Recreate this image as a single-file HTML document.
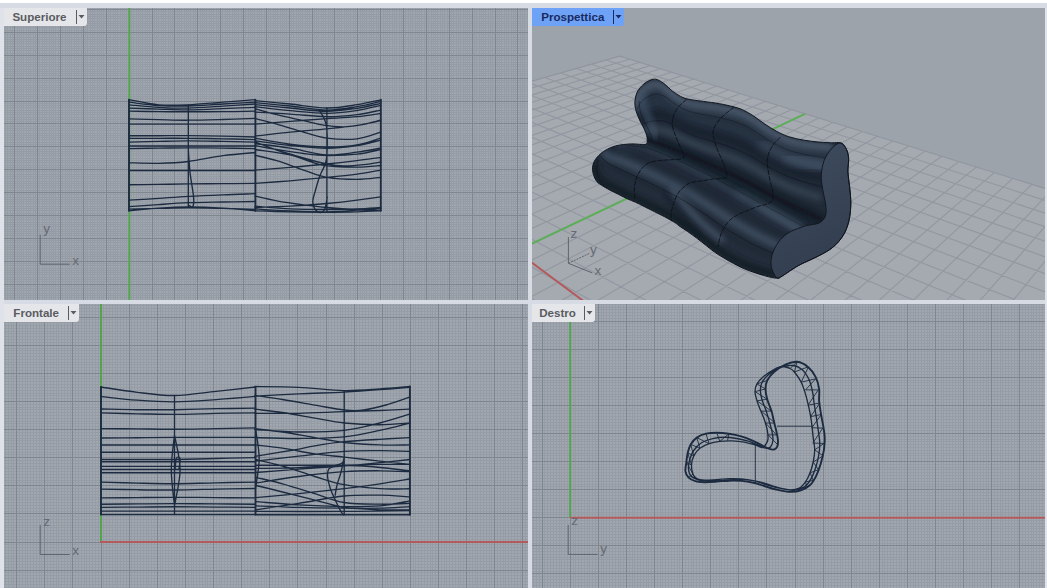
<!DOCTYPE html>
<html lang="it"><head><meta charset="utf-8"><title>Rhino viewports</title>
<style>
html,body{margin:0;padding:0;background:#d7dbe3;}
body{width:1047px;height:588px;overflow:hidden;font-family:"Liberation Sans",sans-serif;}
svg{display:block}
.mi{stroke:#969ca5;stroke-width:1;fill:none;shape-rendering:crispEdges}
.ma{stroke:#80868f;stroke-width:1;fill:none;shape-rendering:crispEdges}
.w{stroke:#1c2b40;stroke-width:1.35;fill:none;stroke-linecap:round;stroke-linejoin:round}
.w2{stroke:#1c2b40;stroke-width:1.9;fill:none;stroke-linecap:round;stroke-linejoin:round}
.w3{stroke:#1c2b40;stroke-width:.9;fill:none;stroke-linejoin:round}
.lb{font:bold 11.6px "Liberation Sans",sans-serif}
.ax{font:13.5px "Liberation Sans",sans-serif;fill:#656a73}
.pg{stroke:#8b909b;stroke-width:1.1;fill:none;opacity:.75}</style></head>
<body>
<svg width="1047" height="588" viewBox="0 0 1047 588">
<defs><clipPath id="c_top"><rect x="4" y="8" width="524" height="292"/></clipPath><clipPath id="c_persp"><rect x="532" y="8" width="513" height="292"/></clipPath><clipPath id="c_front"><rect x="4" y="304" width="524" height="284"/></clipPath><clipPath id="c_right"><rect x="532" y="304" width="513" height="284"/></clipPath>
<clipPath id="sofaclip"><path d="M635 100.6C635.4 97.2 636.2 93.5 638.1 90.4C640 87.3 643.3 84.1 646.2 82.2C649.1 80.3 652.5 79 655.4 79.2C658.3 79.4 660.7 81.3 663.6 83.3C666.5 85.3 669.6 89 672.8 91.4C676 93.8 680 96.2 683 97.6C686 99 688.3 99 691.1 99.6C693.9 100.2 696 100.4 700 101C704 101.6 710.2 102.2 715.3 103C720.4 103.8 726 104.9 730.6 106.1C735.2 107.2 739.1 108.2 742.9 109.9C746.7 111.6 750 113.7 753.6 116C757.2 118.3 760.5 121.2 764.3 123.7C768.1 126.2 772.5 129.1 776.6 131.3C780.7 133.5 784.2 135.2 788.8 136.7C793.4 138.2 799 139.3 804.1 140.2C809.2 141.1 814.8 141.7 819.4 142.1C824 142.5 828.2 142.7 831.7 142.8C835.2 142.9 837.8 142 840.1 142.8C842.4 143.6 844.3 145.3 845.7 147.8C847.1 150.3 848.2 153.6 848.6 157.6C849 161.6 847.7 167.3 847.9 172.1C848.1 176.9 849.1 181.3 849.6 186.6C850.1 191.9 850.9 198.1 850.8 203.9C850.7 209.7 850.1 216 848.8 221.3C847.5 226.6 845.7 231.4 843 235.7C840.3 240 836.9 243.9 832.8 247.3C828.7 250.7 823.9 253.1 818.4 256C812.9 258.9 804.8 262.2 800 264.7C795.2 267.2 792.7 269.2 789.7 271.1C786.7 273 784.1 275 782 276.2C779.9 277.4 778.6 277.9 776.9 278.1C775.2 278.3 773.9 277.9 771.8 277.5C769.7 277.1 767.2 276.5 764.2 275.6C761.2 274.8 757.4 273.6 754 272.4C750.6 271.2 747.2 270.1 743.8 268.6C740.4 267.1 737 265.3 733.6 263.5C730.2 261.7 726.6 259.6 723.4 257.7C720.2 255.8 717.4 254.1 714.4 252C711.4 249.9 708.5 247.3 705.5 245C702.5 242.7 699.6 240.2 696.6 238C693.6 235.8 690.5 233.5 687.7 231.6C684.9 229.7 682.2 228 680 226.5C677.8 225 677.3 224.1 674.7 222.5C672.1 220.9 667.9 218.5 664.5 216.7C661.1 214.9 657.7 213.3 654.3 211.6C650.9 209.9 647.3 208.1 644.1 206.5C640.9 204.9 638 203.4 635.2 202.1C632.4 200.8 630.3 200.2 627.5 198.9C624.7 197.6 621.6 195.9 618.6 194.4C615.6 192.9 612.5 191.5 609.7 190C606.9 188.5 604.1 186.9 602 185.5C599.9 184.1 598.3 183.4 596.9 181.7C595.5 180 594.4 177.6 593.7 175.3C593 173 592.2 170.3 592.5 167.7C592.8 165.1 593.4 162.5 595.2 159.8C597 157.1 600 153.9 603.4 151.6C606.8 149.3 610.9 147.2 615.6 145.9C620.4 144.6 627 144.1 631.9 143.9C636.8 143.7 642.7 145.2 645.2 144.5C647.8 143.8 647.2 141.6 647.2 139.4C647.2 137.2 646.4 134.3 645.2 131.2C644 128.1 641.6 124.4 640.1 121C638.6 117.6 636.9 114.2 636 110.8C635.1 107.4 634.6 104 635 100.6Z"/></clipPath><filter id="b2" x="-20%" y="-20%" width="140%" height="140%"><feGaussianBlur stdDeviation="2"/></filter><filter id="b3" x="-20%" y="-20%" width="140%" height="140%"><feGaussianBlur stdDeviation="3.2"/></filter><filter id="b5" x="-20%" y="-20%" width="140%" height="140%"><feGaussianBlur stdDeviation="5"/></filter><linearGradient id="capg" x1="0" y1="0" x2="0.3" y2="1"><stop offset="0" stop-color="#3f4c5f"/><stop offset="1" stop-color="#333f50"/></linearGradient>
</defs>
<rect width="1047" height="588" fill="#d7dbe3"/>
<rect width="1047" height="3" fill="#ffffff"/>
<rect x="0" y="8" width="4" height="580" fill="#dfe2e8"/>
<rect x="1045" y="8" width="2" height="580" fill="#e0e3ea"/>
<rect x="4" y="8" width="524" height="292" fill="#a1a7af"/>
<rect x="532" y="8" width="513" height="292" fill="#9da3ab"/>
<rect x="4" y="304" width="524" height="284" fill="#a1a7af"/>
<rect x="532" y="304" width="513" height="284" fill="#a1a7af"/>
<g clip-path="url(#c_top)">
<path class="mi" d="M5.6 8V300M7.9 8V300M10.2 8V300M12.5 8V300M17 8V300M19.3 8V300M21.6 8V300M23.9 8V300M26.2 8V300M28.5 8V300M30.8 8V300M33 8V300M35.3 8V300M39.9 8V300M42.2 8V300M44.5 8V300M46.8 8V300M49.1 8V300M51.3 8V300M53.6 8V300M55.9 8V300M58.2 8V300M62.8 8V300M65.1 8V300M67.4 8V300M69.6 8V300M71.9 8V300M74.2 8V300M76.5 8V300M78.8 8V300M81.1 8V300M85.6 8V300M87.9 8V300M90.2 8V300M92.5 8V300M94.8 8V300M97.1 8V300M99.4 8V300M101.7 8V300M103.9 8V300M108.5 8V300M110.8 8V300M113.1 8V300M115.4 8V300M117.7 8V300M120 8V300M122.2 8V300M124.5 8V300M126.8 8V300M131.4 8V300M133.7 8V300M136 8V300M138.2 8V300M140.5 8V300M142.8 8V300M145.1 8V300M147.4 8V300M149.7 8V300M154.3 8V300M156.5 8V300M158.8 8V300M161.1 8V300M163.4 8V300M165.7 8V300M168 8V300M170.3 8V300M172.6 8V300M177.1 8V300M179.4 8V300M181.7 8V300M184 8V300M186.3 8V300M188.6 8V300M190.8 8V300M193.1 8V300M195.4 8V300M200 8V300M202.3 8V300M204.6 8V300M206.9 8V300M209.1 8V300M211.4 8V300M213.7 8V300M216 8V300M218.3 8V300M222.9 8V300M225.2 8V300M227.4 8V300M229.7 8V300M232 8V300M234.3 8V300M236.6 8V300M238.9 8V300M241.2 8V300M245.7 8V300M248 8V300M250.3 8V300M252.6 8V300M254.9 8V300M257.2 8V300M259.5 8V300M261.7 8V300M264 8V300M268.6 8V300M270.9 8V300M273.2 8V300M275.5 8V300M277.8 8V300M280 8V300M282.3 8V300M284.6 8V300M286.9 8V300M291.5 8V300M293.8 8V300M296.1 8V300M298.3 8V300M300.6 8V300M302.9 8V300M305.2 8V300M307.5 8V300M309.8 8V300M314.3 8V300M316.6 8V300M318.9 8V300M321.2 8V300M323.5 8V300M325.8 8V300M328.1 8V300M330.4 8V300M332.6 8V300M337.2 8V300M339.5 8V300M341.8 8V300M344.1 8V300M346.4 8V300M348.7 8V300M350.9 8V300M353.2 8V300M355.5 8V300M360.1 8V300M362.4 8V300M364.7 8V300M366.9 8V300M369.2 8V300M371.5 8V300M373.8 8V300M376.1 8V300M378.4 8V300M383 8V300M385.2 8V300M387.5 8V300M389.8 8V300M392.1 8V300M394.4 8V300M396.7 8V300M399 8V300M401.3 8V300M405.8 8V300M408.1 8V300M410.4 8V300M412.7 8V300M415 8V300M417.3 8V300M419.5 8V300M421.8 8V300M424.1 8V300M428.7 8V300M431 8V300M433.3 8V300M435.6 8V300M437.8 8V300M440.1 8V300M442.4 8V300M444.7 8V300M447 8V300M451.6 8V300M453.9 8V300M456.1 8V300M458.4 8V300M460.7 8V300M463 8V300M465.3 8V300M467.6 8V300M469.9 8V300M474.4 8V300M476.7 8V300M479 8V300M481.3 8V300M483.6 8V300M485.9 8V300M488.2 8V300M490.4 8V300M492.7 8V300M497.3 8V300M499.6 8V300M501.9 8V300M504.2 8V300M506.5 8V300M508.7 8V300M511 8V300M513.3 8V300M515.6 8V300M520.2 8V300M522.5 8V300M524.8 8V300M527 8V300M4 11.8H528M4 14.1H528M4 16.4H528M4 18.7H528M4 21H528M4 23.3H528M4 25.5H528M4 27.8H528M4 30.1H528M4 34.7H528M4 37H528M4 39.3H528M4 41.5H528M4 43.8H528M4 46.1H528M4 48.4H528M4 50.7H528M4 53H528M4 57.6H528M4 59.8H528M4 62.1H528M4 64.4H528M4 66.7H528M4 69H528M4 71.3H528M4 73.6H528M4 75.9H528M4 80.4H528M4 82.7H528M4 85H528M4 87.3H528M4 89.6H528M4 91.9H528M4 94.1H528M4 96.4H528M4 98.7H528M4 103.3H528M4 105.6H528M4 107.9H528M4 110.2H528M4 112.4H528M4 114.7H528M4 117H528M4 119.3H528M4 121.6H528M4 126.2H528M4 128.5H528M4 130.7H528M4 133H528M4 135.3H528M4 137.6H528M4 139.9H528M4 142.2H528M4 144.5H528M4 149H528M4 151.3H528M4 153.6H528M4 155.9H528M4 158.2H528M4 160.5H528M4 162.8H528M4 165H528M4 167.3H528M4 171.9H528M4 174.2H528M4 176.5H528M4 178.8H528M4 181.1H528M4 183.3H528M4 185.6H528M4 187.9H528M4 190.2H528M4 194.8H528M4 197.1H528M4 199.4H528M4 201.6H528M4 203.9H528M4 206.2H528M4 208.5H528M4 210.8H528M4 213.1H528M4 217.6H528M4 219.9H528M4 222.2H528M4 224.5H528M4 226.8H528M4 229.1H528M4 231.4H528M4 233.7H528M4 235.9H528M4 240.5H528M4 242.8H528M4 245.1H528M4 247.4H528M4 249.7H528M4 252H528M4 254.2H528M4 256.5H528M4 258.8H528M4 263.4H528M4 265.7H528M4 268H528M4 270.2H528M4 272.5H528M4 274.8H528M4 277.1H528M4 279.4H528M4 281.7H528M4 286.3H528M4 288.5H528M4 290.8H528M4 293.1H528M4 295.4H528M4 297.7H528M4 300H528"/>
<path class="ma" d="M14.7 8V300M37.6 8V300M60.5 8V300M83.4 8V300M106.2 8V300M129.1 8V300M152 8V300M174.8 8V300M197.7 8V300M220.6 8V300M243.4 8V300M266.3 8V300M289.2 8V300M312.1 8V300M334.9 8V300M357.8 8V300M380.7 8V300M403.5 8V300M426.4 8V300M449.3 8V300M472.1 8V300M495 8V300M517.9 8V300M4 9.5H528M4 32.4H528M4 55.3H528M4 78.1H528M4 101H528M4 123.9H528M4 146.8H528M4 169.6H528M4 192.5H528M4 215.4H528M4 238.2H528M4 261.1H528M4 284H528"/>
<path d="M129.3 8V300" stroke="#52a74d" stroke-width="2" fill="none"/>
<path class="w" d="M129 99.6C134 100.5 148.8 103.9 158.7 104.8C168.6 105.6 177.6 105.2 188.3 104.8C199.1 104.3 212 103 223.1 102.2C234.3 101.3 250 100 255.4 99.6 M129 102.2C134 102.7 148.8 104.9 158.7 105.5C168.6 106.2 177.6 106.3 188.3 106.1C199.1 105.8 212 104.6 223.1 104C234.3 103.3 250 102.5 255.4 102.2 M129 104.8C134 105.2 148.8 106.8 158.7 107.3C168.6 107.9 177.6 108.3 188.3 108.1C199.1 107.9 212 106.7 223.1 106.1C234.3 105.4 250 104.3 255.4 104 M129 108.1C134 108.3 148.8 108.8 158.7 109.1C168.6 109.4 177.6 110 188.3 109.9C199.1 109.8 212 109.1 223.1 108.6C234.3 108.2 250 107.6 255.4 107.3 M129 111.2C134 111.3 148.8 111.6 158.7 111.7C168.6 111.8 177.6 111.7 188.3 111.7C199.1 111.7 212 111.8 223.1 111.7C234.3 111.6 250 111.3 255.4 111.2 M129 118.9C134 119.1 148.8 119.5 158.7 119.7C168.6 119.9 177.6 120.3 188.3 120.2C199.1 120.2 212 119.8 223.1 119.5C234.3 119.2 250 118.6 255.4 118.4 M129 124.1C134 124.1 148.8 124.1 158.7 124.1C168.6 124.1 177.6 124.1 188.3 124.1C199.1 124.1 212 124.1 223.1 124.1C234.3 124.1 250 124.1 255.4 124.1 M129 135.7C134 135.7 148.8 135.7 158.7 135.7C168.6 135.7 177.6 135.6 188.3 135.7C199.1 135.8 212 136 223.1 136.2C234.3 136.4 250 136.9 255.4 137 M129 138.3C134 138.3 148.8 138.3 158.7 138.3C168.6 138.3 177.6 138.2 188.3 138.3C199.1 138.4 212 138.6 223.1 138.8C234.3 139 250 139.4 255.4 139.6 M129 142.2C134 142 148.8 141.6 158.7 141.4C168.6 141.2 177.6 140.9 188.3 140.9C199.1 140.9 212 141.2 223.1 141.4C234.3 141.6 250 142 255.4 142.2 M129 146C134 146 148.8 146 158.7 146C168.6 146 177.6 146 188.3 146C199.1 146 212 146 223.1 146C234.3 146 250 146 255.4 146 M129 148.6C134 148.5 148.8 148.2 158.7 148.1C168.6 148 177.6 147.8 188.3 147.8C199.1 147.8 212 148 223.1 148.1C234.3 148.2 250 148.5 255.4 148.6 M129 162.8C134 162.9 148.8 163.5 158.7 163.3C168.6 163.1 177.6 162.8 188.3 161.5C199.1 160.2 212 157.1 223.1 155.6C234.3 154.1 250 153 255.4 152.5 M129 170.5C134 170.5 148.8 170.5 158.7 170.5C168.6 170.5 177.6 170.5 188.3 170.5C199.1 170.5 212 170.5 223.1 170.5C234.3 170.5 250 170.5 255.4 170.5 M129 184.7C134 184.7 148.8 184.6 158.7 184.4C168.6 184.3 177.6 184.1 188.3 183.9C199.1 183.8 212 183.8 223.1 183.7C234.3 183.6 250 183.5 255.4 183.4 M129 200.2C134 199.9 148.8 199 158.7 198.4C168.6 197.7 177.6 196.9 188.3 196.3C199.1 195.7 212 195.2 223.1 194.8C234.3 194.3 250 193.9 255.4 193.7 M129 206.6C134 206.3 148.8 205.2 158.7 204.6C168.6 203.9 177.6 203.2 188.3 202.7C199.1 202.3 212 202.2 223.1 202C234.3 201.8 250 201.5 255.4 201.5 M129 210.7C134 210.3 148.8 208.8 158.7 208.2C168.6 207.5 177.6 206.9 188.3 206.9C199.1 206.9 212 207.5 223.1 208.2C234.3 208.8 250 210.3 255.4 210.7 M129 209.2C134 209.1 148.8 208.6 158.7 208.4C168.6 208.2 177.6 207.9 188.3 207.9C199.1 207.9 212 208.2 223.1 208.4C234.3 208.7 250 209.3 255.4 209.5"/><path class="w" d="M255.1 100.7C260.9 101.2 278.1 102.8 290.1 104C302.1 105.3 315.7 107.9 326.9 108C338 108.2 348 106.1 357 104.7C365.9 103.3 376.8 100.6 380.8 99.8 M255.1 102.7C260.9 103.3 278.1 104.8 290.1 106C302.1 107.3 315.7 109.9 326.9 110.1C338 110.2 348 108.2 357 106.7C365.9 105.3 376.8 102.3 380.8 101.4 M255.1 104.7C260.9 105.3 278.1 106.9 290.1 108C302.1 109.2 315.7 111.3 326.9 111.4C338 111.4 348 109.6 357 108.3C365.9 107 376.8 104.2 380.8 103.4 M255.1 106.7C260.9 107.4 278.1 109.6 290.1 110.7C302.1 111.8 315.7 113.4 326.9 113.4C338 113.3 348 111.8 357 110.5C365.9 109.1 376.8 106.2 380.8 105.4 M255.1 112.1C260.9 112.4 278.1 113.3 290.1 114.1C302.1 114.8 315.7 116.6 326.9 116.7C338 116.8 348 115.8 357 114.7C365.9 113.6 376.8 110.8 380.8 110.1 M255.1 108.7C258.7 109.7 268.7 112.7 276.7 114.7C284.8 116.7 295.5 119 303.5 120.7C311.5 122.5 318.2 124.4 324.9 125.4C331.6 126.4 337.1 126.9 343.6 126.8C350.1 126.6 357.5 125.5 363.7 124.4C369.8 123.2 377.9 120.8 380.8 120.1 M255.1 118.7C258.7 119.6 268.7 121.9 276.7 124.1C284.8 126.3 295.1 129.8 303.5 132.1C311.8 134.5 318 137 326.9 138.1C335.8 139.2 348 139.8 357 138.8C365.9 137.8 376.8 133.2 380.8 132.1 M255.1 136.1C260.9 135.5 278.1 133.3 290.1 132.1C302.1 130.9 315.7 129.9 326.9 128.8C338 127.7 348 126.8 357 125.4C365.9 124.1 376.8 121.5 380.8 120.7 M255.1 124.1C260.9 123.6 278.1 122.3 290.1 121.4C302.1 120.5 315.7 119.5 326.9 118.7C338 118 348 117.6 357 116.7C365.9 115.8 376.8 114 380.8 113.4 M255.1 138.1C260.9 139.1 278.1 142.7 290.1 144.1C302.1 145.6 315.7 146.7 326.9 146.8C338 146.9 348 146.3 357 144.8C365.9 143.4 376.8 139.2 380.8 138.1 M255.1 140.8C260.9 141.6 278.1 144.3 290.1 145.5C302.1 146.7 315.7 148.2 326.9 148.2C338 148.2 348 146.8 357 145.5C365.9 144.1 376.8 141 380.8 140.1 M255.1 143.5C260.9 144.3 278.1 146.3 290.1 148.2C302.1 150.1 315.7 154.2 326.9 154.8C338 155.5 348 153.3 357 152.2C365.9 151.1 376.8 148.8 380.8 148.2 M255.1 145.5C258.7 146.2 268.7 148.2 276.7 149.5C284.8 150.8 295.1 152.5 303.5 153.5C311.8 154.5 318 155.4 326.9 155.5C335.8 155.6 348 155.2 357 154.2C365.9 153.2 376.8 150.3 380.8 149.5 M255.1 149.5C260.9 150.4 280.9 152.8 290.1 154.8C299.3 156.8 304 159.7 310.2 161.5C316.3 163.4 319.1 164.9 326.9 165.8C334.7 166.7 348 167.2 357 167.1C365.9 167.1 376.8 165.8 380.8 165.5 M255.1 155.3C258.7 156.2 268.7 158.2 276.7 160.7C284.8 163.1 295.1 167.3 303.5 170.1C311.8 172.8 318 175.9 326.9 177.4C335.8 179 348 179.4 357 179.4C365.9 179.4 376.8 177.7 380.8 177.4 M255.1 170.1C260.9 169.6 278.1 168.4 290.1 167.4C302.1 166.4 315.7 165.2 326.9 164C338 162.9 348 161.8 357 160.7C365.9 159.6 376.8 157.9 380.8 157.4 M255.1 183.4C260.9 183 278.1 181.8 290.1 180.8C302.1 179.7 315.7 178.5 326.9 177.4C338 176.3 348 175.3 357 174.1C365.9 172.8 376.8 170.7 380.8 170.1 M255.1 142C258.7 143.3 268.7 147.3 276.7 150C284.8 152.7 295.1 155.7 303.5 158C311.8 160.4 320.2 162.7 326.9 164C333.6 165.4 337.5 165.9 343.6 166C349.7 166.2 357.5 165.4 363.7 164.7C369.8 164 377.9 162.5 380.8 162 M255.1 196.1C258.7 196.9 268.7 199.4 276.7 200.8C284.8 202.3 295.1 203.7 303.5 204.8C311.8 205.9 318 206.7 326.9 207.5C335.8 208.3 348 209.1 357 209.5C365.9 209.9 376.8 210.1 380.8 210.2 M255.1 207.5C260.9 207.3 278.1 206.8 290.1 206.2C302.1 205.5 315.7 204.5 326.9 203.5C338 202.5 348 201.3 357 200.1C365.9 199 376.8 197.4 380.8 196.8 M255.1 208.8C260.9 209.2 278.1 210.3 290.1 210.8C302.1 211.3 315.7 211.9 326.9 211.8C338 211.7 348 210.8 357 210.2C365.9 209.6 376.8 208.5 380.8 208.2 M255.1 210.8C260.9 211 278.1 211.6 290.1 211.8C302.1 212 315.7 212.2 326.9 212.2C338 212.2 348 212 357 211.8C365.9 211.6 376.8 211 380.8 210.8 M255.1 206.2C260.9 206.6 278.1 208.3 290.1 208.8C302.1 209.4 315.7 209.5 326.9 209.5C338 209.5 348 209.2 357 208.8C365.9 208.5 376.8 207.7 380.8 207.5"/><path class="w" d="M188.3 104.8V207.1 M326.9 108V212.2 M188.3 149.9C188.6 153.8 189.3 165.8 190.1 173.1C191 180.4 192.6 188.8 193.2 193.7C193.8 198.7 193.9 200.5 193.7 202.7C193.6 205 192.9 206.7 192.2 207.1C191.5 207.6 190.1 205.8 189.6 205.6 M319.5 110.7C320.3 112.1 323 115.6 324.2 118.7C325.4 121.9 326.4 123.3 326.9 129.4C327.3 135.5 327.2 149.5 326.9 155.3C326.5 161.2 326.1 161.1 324.9 164.7C323.7 168.3 321.1 172.5 319.5 176.7C318 181 316.6 186.1 315.5 190.1C314.4 194.1 313 197.7 312.8 200.8C312.7 203.9 313.6 206.9 314.8 208.8C316.1 210.8 318.5 212.6 320.2 212.6C321.9 212.6 323.7 211.5 324.9 208.8C326.1 206.2 326.9 198.8 327.3 196.8"/><path class="w2" d="M255.4 99.6V210.7 M129 99.6V210.7 M380.8 99.8V210.8"/>
</g>
<g clip-path="url(#c_front)">
<path class="mi" d="M5.4 304V588M8.2 304V588M11 304V588M13.8 304V588M19.5 304V588M22.3 304V588M25.1 304V588M27.9 304V588M30.7 304V588M33.5 304V588M36.3 304V588M39.1 304V588M41.9 304V588M47.6 304V588M50.4 304V588M53.2 304V588M56 304V588M58.8 304V588M61.6 304V588M64.4 304V588M67.3 304V588M70.1 304V588M75.7 304V588M78.5 304V588M81.3 304V588M84.1 304V588M86.9 304V588M89.8 304V588M92.6 304V588M95.4 304V588M98.2 304V588M103.8 304V588M106.6 304V588M109.4 304V588M112.2 304V588M115.1 304V588M117.9 304V588M120.7 304V588M123.5 304V588M126.3 304V588M131.9 304V588M134.7 304V588M137.6 304V588M140.4 304V588M143.2 304V588M146 304V588M148.8 304V588M151.6 304V588M154.4 304V588M160.1 304V588M162.9 304V588M165.7 304V588M168.5 304V588M171.3 304V588M174.1 304V588M176.9 304V588M179.7 304V588M182.5 304V588M188.2 304V588M191 304V588M193.8 304V588M196.6 304V588M199.4 304V588M202.2 304V588M205 304V588M207.9 304V588M210.7 304V588M216.3 304V588M219.1 304V588M221.9 304V588M224.7 304V588M227.5 304V588M230.4 304V588M233.2 304V588M236 304V588M238.8 304V588M244.4 304V588M247.2 304V588M250 304V588M252.8 304V588M255.7 304V588M258.5 304V588M261.3 304V588M264.1 304V588M266.9 304V588M272.5 304V588M275.3 304V588M278.2 304V588M281 304V588M283.8 304V588M286.6 304V588M289.4 304V588M292.2 304V588M295 304V588M300.7 304V588M303.5 304V588M306.3 304V588M309.1 304V588M311.9 304V588M314.7 304V588M317.5 304V588M320.3 304V588M323.1 304V588M328.8 304V588M331.6 304V588M334.4 304V588M337.2 304V588M340 304V588M342.8 304V588M345.6 304V588M348.5 304V588M351.3 304V588M356.9 304V588M359.7 304V588M362.5 304V588M365.3 304V588M368.1 304V588M371 304V588M373.8 304V588M376.6 304V588M379.4 304V588M385 304V588M387.8 304V588M390.6 304V588M393.4 304V588M396.3 304V588M399.1 304V588M401.9 304V588M404.7 304V588M407.5 304V588M413.1 304V588M415.9 304V588M418.8 304V588M421.6 304V588M424.4 304V588M427.2 304V588M430 304V588M432.8 304V588M435.6 304V588M441.3 304V588M444.1 304V588M446.9 304V588M449.7 304V588M452.5 304V588M455.3 304V588M458.1 304V588M460.9 304V588M463.7 304V588M469.4 304V588M472.2 304V588M475 304V588M477.8 304V588M480.6 304V588M483.4 304V588M486.2 304V588M489.1 304V588M491.9 304V588M497.5 304V588M500.3 304V588M503.1 304V588M505.9 304V588M508.7 304V588M511.6 304V588M514.4 304V588M517.2 304V588M520 304V588M525.6 304V588M4 305.8H528M4 308.6H528M4 311.4H528M4 314.2H528M4 319.9H528M4 322.7H528M4 325.5H528M4 328.3H528M4 331.1H528M4 333.9H528M4 336.7H528M4 339.5H528M4 342.3H528M4 348H528M4 350.8H528M4 353.6H528M4 356.4H528M4 359.2H528M4 362H528M4 364.8H528M4 367.7H528M4 370.5H528M4 376.1H528M4 378.9H528M4 381.7H528M4 384.5H528M4 387.3H528M4 390.2H528M4 393H528M4 395.8H528M4 398.6H528M4 404.2H528M4 407H528M4 409.8H528M4 412.6H528M4 415.5H528M4 418.3H528M4 421.1H528M4 423.9H528M4 426.7H528M4 432.3H528M4 435.1H528M4 438H528M4 440.8H528M4 443.6H528M4 446.4H528M4 449.2H528M4 452H528M4 454.8H528M4 460.5H528M4 463.3H528M4 466.1H528M4 468.9H528M4 471.7H528M4 474.5H528M4 477.3H528M4 480.1H528M4 482.9H528M4 488.6H528M4 491.4H528M4 494.2H528M4 497H528M4 499.8H528M4 502.6H528M4 505.4H528M4 508.3H528M4 511.1H528M4 516.7H528M4 519.5H528M4 522.3H528M4 525.1H528M4 527.9H528M4 530.8H528M4 533.6H528M4 536.4H528M4 539.2H528M4 544.8H528M4 547.6H528M4 550.4H528M4 553.2H528M4 556.1H528M4 558.9H528M4 561.7H528M4 564.5H528M4 567.3H528M4 572.9H528M4 575.7H528M4 578.6H528M4 581.4H528M4 584.2H528M4 587H528"/>
<path class="ma" d="M16.6 304V588M44.8 304V588M72.9 304V588M101 304V588M129.1 304V588M157.2 304V588M185.4 304V588M213.5 304V588M241.6 304V588M269.7 304V588M297.8 304V588M326 304V588M354.1 304V588M382.2 304V588M410.3 304V588M438.4 304V588M466.6 304V588M494.7 304V588M522.8 304V588M4 317H528M4 345.2H528M4 373.3H528M4 401.4H528M4 429.5H528M4 457.6H528M4 485.8H528M4 513.9H528M4 542H528M4 570.1H528"/>
<path d="M101 304V542" stroke="#52a54d" stroke-width="2" fill="none"/>
<path d="M100 542H528" stroke="#b35a5c" stroke-width="2" fill="none"/>
<path class="w" d="M101 387C107.1 387.9 125 390.9 137.3 392.3C149.5 393.8 161.3 395.6 174.5 395.5C187.6 395.3 202.6 392.8 216.1 391.4C229.6 390 248.9 387.7 255.5 387 M101 396.4C107.1 397.1 125 399.3 137.3 400.2C149.5 401.1 161.3 401.9 174.5 401.8C187.6 401.7 202.6 400.5 216.1 399.6C229.6 398.7 248.9 397 255.5 396.4 M101 409C107.1 409.1 125 409.6 137.3 409.7C149.5 409.8 161.3 409.8 174.5 409.7C187.6 409.5 202.6 409 216.1 408.7C229.6 408.5 248.9 408.2 255.5 408.1 M101 412.8C107.1 413 125 413.5 137.3 413.8C149.5 414 161.3 414.4 174.5 414.4C187.6 414.3 202.6 413.7 216.1 413.4C229.6 413.2 248.9 412.9 255.5 412.8 M101 428.6C107.1 428.6 125 428.8 137.3 428.9C149.5 429 161.3 429.3 174.5 429.2C187.6 429.2 202.6 428.8 216.1 428.6C229.6 428.4 248.9 428.1 255.5 427.9 M101 438C107.1 438 125 437.8 137.3 437.7C149.5 437.6 161.3 437.5 174.5 437.4C187.6 437.3 202.6 437.4 216.1 437.4C229.6 437.4 248.9 437.4 255.5 437.4 M101 445C107.1 445 125 445 137.3 445C149.5 445 161.3 445 174.5 445C187.6 445 202.6 445 216.1 445C229.6 445 248.9 445 255.5 445 M101 452.2C107.1 452.2 125 452.2 137.3 452.2C149.5 452.2 161.3 452.2 174.5 452.2C187.6 452.2 202.6 452.2 216.1 452.2C229.6 452.2 248.9 452.2 255.5 452.2 M101 459.5C107.1 459.5 125 459.5 137.3 459.5C149.5 459.5 161.3 459.6 174.5 459.5C187.6 459.3 202.6 458.8 216.1 458.5C229.6 458.2 248.9 457.7 255.5 457.6 M101 461.7C107.1 461.7 125 461.7 137.3 461.7C149.5 461.7 161.3 461.7 174.5 461.7C187.6 461.7 202.6 461.7 216.1 461.7C229.6 461.7 248.9 461.7 255.5 461.7 M101 466.4C107.1 466.4 125 466.4 137.3 466.4C149.5 466.4 161.3 466.4 174.5 466.4C187.6 466.4 202.6 466.4 216.1 466.4C229.6 466.4 248.9 466.4 255.5 466.4 M101 469.5C107.1 469.5 125 469.5 137.3 469.5C149.5 469.5 161.3 469.5 174.5 469.5C187.6 469.5 202.6 469.5 216.1 469.5C229.6 469.5 248.9 469.5 255.5 469.5 M101 472.7C107.1 472.7 125 472.7 137.3 472.7C149.5 472.7 161.3 472.7 174.5 472.7C187.6 472.7 202.6 472.7 216.1 472.7C229.6 472.7 248.9 472.7 255.5 472.7 M101 482.2C107.1 482.3 125 482.8 137.3 483.1C149.5 483.4 161.3 483.8 174.5 483.7C187.6 483.7 202.6 483 216.1 482.8C229.6 482.5 248.9 482.3 255.5 482.2 M101 489.1C107.1 489.2 125 489.6 137.3 489.7C149.5 489.9 161.3 490.1 174.5 490C187.6 489.9 202.6 489.4 216.1 489.1C229.6 488.8 248.9 488.6 255.5 488.5 M101 497.9C107.1 497.9 125 497.7 137.3 497.6C149.5 497.5 161.3 497.3 174.5 497.3C187.6 497.3 202.6 497.5 216.1 497.6C229.6 497.7 248.9 497.9 255.5 497.9 M101 504.2C107.1 504.2 125 504 137.3 503.9C149.5 503.8 161.3 503.6 174.5 503.6C187.6 503.6 202.6 503.8 216.1 503.9C229.6 504 248.9 504.2 255.5 504.2 M101 507.4C107.1 507.3 125 507.2 137.3 507.1C149.5 506.9 161.3 506.7 174.5 506.7C187.6 506.7 202.6 506.9 216.1 507.1C229.6 507.2 248.9 507.3 255.5 507.4 M101 511.1C107.1 511.1 125 511.1 137.3 511.1C149.5 511.1 161.3 511.1 174.5 511.1C187.6 511.1 202.6 511.1 216.1 511.1C229.6 511.1 248.9 511.1 255.5 511.1 M101 514.6C107.1 514.6 125 514.6 137.3 514.6C149.5 514.6 161.3 514.6 174.5 514.6C187.6 514.6 202.6 514.6 216.1 514.6C229.6 514.6 248.9 514.6 255.5 514.6"/><path class="w" d="M254.9 386.5C262.2 386.6 283.8 386.6 298.7 387.3C313.6 388 330.6 390.3 344.2 390.6C357.7 390.8 368.9 389.6 379.9 388.9C390.9 388.3 404.9 386.9 409.9 386.5 M254.9 396.2C262.2 395.8 283.8 394.5 298.7 393.8C313.6 393.1 330.6 392.9 344.2 392.2C357.7 391.5 368.9 390.6 379.9 389.7C390.9 388.9 404.9 387.7 409.9 387.3 M254.9 395.4C259.5 396.1 272.5 397.9 282.5 399.5C292.5 401.1 304.7 403.4 314.9 405.2C325.2 406.9 336.1 409.2 344.2 410C352.3 410.8 356.3 411 363.7 410C371 409.1 380.3 406.5 388 404.4C395.7 402.2 406.3 398.3 409.9 397 M254.9 409.2C259.5 409.8 272.5 411 282.5 412.5C292.5 414 304.7 416.4 314.9 418.2C325.2 419.9 333.3 421.9 344.2 423C355 424.1 368.9 424.7 379.9 424.7C390.9 424.7 404.9 423.3 409.9 423 M254.9 413.3C262.2 413.3 283.8 413.6 298.7 413.3C313.6 413 330.6 412.1 344.2 411.7C357.7 411.2 368.9 410.9 379.9 410.5C390.9 410.1 404.9 409.4 409.9 409.2 M254.9 428.7C259.5 429.3 272.5 430.5 282.5 432C292.5 433.4 304.7 435.9 314.9 437.6C325.2 439.4 333.3 441.3 344.2 442.5C355 443.7 368.9 444.5 379.9 444.9C390.9 445.4 404.9 444.9 409.9 444.9 M254.9 429.5C262.2 429.9 283.8 431.8 298.7 432C313.6 432.1 330.6 431.8 344.2 430.3C357.7 428.8 368.9 425.7 379.9 423C390.9 420.3 404.9 415.6 409.9 414.1 M254.9 437.6C262.2 437.8 283.8 438.6 298.7 438.5C313.6 438.3 330.6 438.2 344.2 436.8C357.7 435.5 368.9 432.6 379.9 430.3C390.9 428 404.9 424.2 409.9 423 M254.9 444.9C259.5 445.5 272.5 446.7 282.5 448.2C292.5 449.7 304.7 452.4 314.9 453.9C325.2 455.4 333.3 455.9 344.2 457.1C355 458.3 368.9 460 379.9 461.2C390.9 462.4 404.9 463.9 409.9 464.4 M254.9 456.3C261.4 455.3 283.8 451.7 293.8 450C303.9 448.2 306.6 447.1 314.9 445.8C323.3 444.4 333.3 442.8 344.2 441.7C355 440.6 368.9 439.9 379.9 439.3C390.9 438.6 404.9 437.9 409.9 437.6 M255.7 461.1C262.9 460.3 284 457.9 298.7 456.2C313.5 454.6 330.6 452.3 344.2 451.4C357.7 450.4 368.9 450.6 379.9 450.6C390.9 450.6 404.9 451.2 409.9 451.4 M255.7 459.5C260.1 460.6 272.6 463.1 282.5 466C292.3 468.8 304.7 473.4 314.9 476.5C325.2 479.6 333.3 482.6 344.2 484.7C355 486.7 368.9 488 379.9 488.7C390.9 489.4 404.9 488.7 409.9 488.7 M255.7 465.2C262.9 465.2 284 465.2 298.7 465.2C313.5 465.2 330.6 465.3 344.2 465.2C357.7 465 368.9 464.5 379.9 464.4C390.9 464.2 404.9 464.4 409.9 464.4 M255.7 468.4C262.9 468.3 286.1 468 298.7 467.6C311.3 467.2 320.4 466.2 331.2 466C342 465.7 350.5 465.2 363.7 466C376.8 466.8 402.2 470 409.9 470.8 M255.7 472.5C262.9 471.9 284 470.3 298.7 469.2C313.5 468.1 330.6 467.1 344.2 466C357.7 464.9 368.9 463.8 379.9 462.7C390.9 461.6 404.9 460 409.9 459.5 M255.7 483C262.9 481.9 284 478.4 298.7 476.5C313.5 474.6 330.6 472.6 344.2 471.7C357.7 470.7 368.9 470.8 379.9 470.8C390.9 470.8 404.9 471.5 409.9 471.7 M255.7 485.5C260.1 486.5 272.6 489.5 282.5 492C292.3 494.4 304.7 497.5 314.9 500.1C325.2 502.6 333.3 505.8 344.2 507.4C355 509 368.9 509.4 379.9 509.8C390.9 510.2 404.9 509.8 409.9 509.8 M255.7 497.6C262.9 497 284 495.1 298.7 493.6C313.5 492.1 330.6 490.3 344.2 488.7C357.7 487.1 368.9 485.5 379.9 483.8C390.9 482.2 404.9 479.8 409.9 479 M255.7 509.8C262.9 508.7 284 505.6 298.7 503.3C313.5 501 330.6 497.4 344.2 496C357.7 494.7 368.9 495.1 379.9 495.2C390.9 495.3 404.9 496.6 409.9 496.8 M255.7 501.7C262.9 502.2 284 504.1 298.7 504.9C313.5 505.8 330.6 506.4 344.2 506.6C357.7 506.7 368.9 506.7 379.9 505.8C390.9 504.8 404.9 501.7 409.9 500.9 M255.7 505.8C262.9 506 284 507 298.7 507.4C313.5 507.8 330.6 508.1 344.2 508.2C357.7 508.3 368.9 508.5 379.9 508.2C390.9 507.9 404.9 506.8 409.9 506.6 M255.7 511.4C270.4 511.4 318.5 511.6 344.2 511.4C369.9 511.3 399 510.8 409.9 510.6 M255.7 514.7C270.4 514.7 318.5 514.7 344.2 514.7C369.9 514.7 399 514.7 409.9 514.7 M255.7 477.3C260.1 478.4 272.6 481.1 282.5 483.8C292.3 486.5 304.7 490.5 314.9 493.6C325.2 496.7 333.3 500.8 344.2 502.5C355 504.3 368.9 504 379.9 504.1C390.9 504.3 404.9 503.5 409.9 503.3"/><path class="w" d="M174.5 395.5V514.6 M344.2 390.6V514.7 M174.5 434.9C173.9 440.7 171.3 457.7 171.3 469.5C171.3 481.4 173.9 499.8 174.5 505.8 M174.5 434.9C175.4 440.7 180.1 457.7 180.1 469.5C180.1 481.4 175.4 499.8 174.5 505.8 M175.1 469.5C175.3 467.9 175.5 461.6 176 459.5C176.6 457.4 177.6 456.9 178.2 456.9C178.9 456.9 180 457.4 180.1 459.5C180.2 461.6 179.1 467.9 178.9 469.5 M255.5 428.6C256.1 433.6 259.2 448.5 259.2 458.5C259.2 468.5 256.1 483.5 255.5 488.5 M344.2 456.2C343.9 457.3 344.2 461.1 342.5 462.7C340.9 464.4 336.7 464.9 334.4 466C332.1 467.1 329.9 467.3 328.7 469.2C327.6 471.1 327.3 474.1 327.6 477.3C327.9 480.6 329 484.7 330.4 488.7C331.8 492.8 334.3 497.9 336.1 501.7C337.8 505.5 339.7 509.3 340.9 511.4C342.1 513.6 343 514.1 343.4 514.7 M344.2 457.9C343.6 460.3 342.1 467.9 340.9 472.5C339.7 477.1 337.8 481.7 336.9 485.5C335.9 489.3 335.5 493.6 335.2 495.2"/><path class="w2" d="M255.5 387V514.6 M101 387V514.6 M409.9 386.5V514.7"/>
</g>
<g clip-path="url(#c_right)">
<path class="mi" d="M533.7 304V588M536.5 304V588M539.3 304V588M544.9 304V588M547.7 304V588M550.5 304V588M553.3 304V588M556.2 304V588M559 304V588M561.8 304V588M564.6 304V588M567.4 304V588M573 304V588M575.8 304V588M578.6 304V588M581.4 304V588M584.2 304V588M587.1 304V588M589.9 304V588M592.7 304V588M595.5 304V588M601.1 304V588M603.9 304V588M606.7 304V588M609.5 304V588M612.4 304V588M615.2 304V588M618 304V588M620.8 304V588M623.6 304V588M629.2 304V588M632 304V588M634.8 304V588M637.6 304V588M640.5 304V588M643.3 304V588M646.1 304V588M648.9 304V588M651.7 304V588M657.3 304V588M660.1 304V588M662.9 304V588M665.7 304V588M668.6 304V588M671.4 304V588M674.2 304V588M677 304V588M679.8 304V588M685.4 304V588M688.2 304V588M691 304V588M693.8 304V588M696.7 304V588M699.5 304V588M702.3 304V588M705.1 304V588M707.9 304V588M713.5 304V588M716.3 304V588M719.1 304V588M721.9 304V588M724.8 304V588M727.6 304V588M730.4 304V588M733.2 304V588M736 304V588M741.6 304V588M744.4 304V588M747.2 304V588M750 304V588M752.9 304V588M755.7 304V588M758.5 304V588M761.3 304V588M764.1 304V588M769.7 304V588M772.5 304V588M775.3 304V588M778.1 304V588M781 304V588M783.8 304V588M786.6 304V588M789.4 304V588M792.2 304V588M797.8 304V588M800.6 304V588M803.4 304V588M806.2 304V588M809.1 304V588M811.9 304V588M814.7 304V588M817.5 304V588M820.3 304V588M825.9 304V588M828.7 304V588M831.5 304V588M834.3 304V588M837.2 304V588M840 304V588M842.8 304V588M845.6 304V588M848.4 304V588M854 304V588M856.8 304V588M859.6 304V588M862.4 304V588M865.2 304V588M868.1 304V588M870.9 304V588M873.7 304V588M876.5 304V588M882.1 304V588M884.9 304V588M887.7 304V588M890.5 304V588M893.4 304V588M896.2 304V588M899 304V588M901.8 304V588M904.6 304V588M910.2 304V588M913 304V588M915.8 304V588M918.6 304V588M921.5 304V588M924.3 304V588M927.1 304V588M929.9 304V588M932.7 304V588M938.3 304V588M941.1 304V588M943.9 304V588M946.7 304V588M949.6 304V588M952.4 304V588M955.2 304V588M958 304V588M960.8 304V588M966.4 304V588M969.2 304V588M972 304V588M974.8 304V588M977.7 304V588M980.5 304V588M983.3 304V588M986.1 304V588M988.9 304V588M994.5 304V588M997.3 304V588M1000.1 304V588M1002.9 304V588M1005.8 304V588M1008.6 304V588M1011.4 304V588M1014.2 304V588M1017 304V588M1022.6 304V588M1025.4 304V588M1028.2 304V588M1031 304V588M1033.9 304V588M1036.7 304V588M1039.5 304V588M1042.3 304V588M532 304.1H1045M532 307H1045M532 309.8H1045M532 312.6H1045M532 315.4H1045M532 318.2H1045M532 323.8H1045M532 326.6H1045M532 329.4H1045M532 332.2H1045M532 335.1H1045M532 337.9H1045M532 340.7H1045M532 343.5H1045M532 346.3H1045M532 351.9H1045M532 354.7H1045M532 357.5H1045M532 360.3H1045M532 363.2H1045M532 366H1045M532 368.8H1045M532 371.6H1045M532 374.4H1045M532 380H1045M532 382.8H1045M532 385.6H1045M532 388.4H1045M532 391.3H1045M532 394.1H1045M532 396.9H1045M532 399.7H1045M532 402.5H1045M532 408.1H1045M532 410.9H1045M532 413.7H1045M532 416.5H1045M532 419.4H1045M532 422.2H1045M532 425H1045M532 427.8H1045M532 430.6H1045M532 436.2H1045M532 439H1045M532 441.8H1045M532 444.6H1045M532 447.5H1045M532 450.3H1045M532 453.1H1045M532 455.9H1045M532 458.7H1045M532 464.3H1045M532 467.1H1045M532 469.9H1045M532 472.7H1045M532 475.6H1045M532 478.4H1045M532 481.2H1045M532 484H1045M532 486.8H1045M532 492.4H1045M532 495.2H1045M532 498H1045M532 500.8H1045M532 503.7H1045M532 506.5H1045M532 509.3H1045M532 512.1H1045M532 514.9H1045M532 520.5H1045M532 523.3H1045M532 526.1H1045M532 528.9H1045M532 531.8H1045M532 534.6H1045M532 537.4H1045M532 540.2H1045M532 543H1045M532 548.6H1045M532 551.4H1045M532 554.2H1045M532 557H1045M532 559.9H1045M532 562.7H1045M532 565.5H1045M532 568.3H1045M532 571.1H1045M532 576.7H1045M532 579.5H1045M532 582.3H1045M532 585.1H1045M532 588H1045"/>
<path class="ma" d="M542.1 304V588M570.2 304V588M598.3 304V588M626.4 304V588M654.5 304V588M682.6 304V588M710.7 304V588M738.8 304V588M766.9 304V588M795 304V588M823.1 304V588M851.2 304V588M879.3 304V588M907.4 304V588M935.5 304V588M963.6 304V588M991.7 304V588M1019.8 304V588M532 321H1045M532 349.1H1045M532 377.2H1045M532 405.3H1045M532 433.4H1045M532 461.5H1045M532 489.6H1045M532 517.7H1045M532 545.8H1045M532 573.9H1045"/>
<path d="M570.2 304V517.7" stroke="#52a54d" stroke-width="2" fill="none"/>
<path d="M570.2 517.7H1045" stroke="#b35a5c" stroke-width="2" fill="none"/>
<path class="w2" d="M797 361.8C800.7 362.2 804.9 364.3 808 366.9C811.1 369.4 813.9 373.4 815.7 377.1C817.6 380.8 818.5 385 819.1 389C819.7 393 818.8 396.9 819.1 400.9C819.4 404.9 820.1 408.6 820.8 412.8C821.5 417.1 822.6 422.3 823.3 426.4C823.9 430.5 824.6 433.7 824.7 437.6C824.8 441.5 824.5 445.5 823.9 449.8C823.2 454.1 822.1 459.3 820.8 463.6C819.5 467.9 818 472.2 816.2 475.8C814.4 479.4 812.7 482.6 810.1 485C807.5 487.4 804.2 489.2 800.9 490.4C797.6 491.5 794 492 790.2 491.9C786.4 491.8 782.1 490.8 778 489.9C773.9 489 769.8 487.7 765.7 486.5C761.6 485.3 757.6 483.6 753.5 482.7C749.4 481.8 745.3 481.2 741.2 480.9C737.1 480.6 733.1 480.6 729 480.7C724.9 480.8 720.8 481.4 716.7 481.6C712.6 481.9 708.1 482.3 704.5 482.2C700.9 482.1 698 482 695.3 481.2C692.6 480.4 690 479.1 688.4 477.4C686.8 475.7 685.7 473.8 685.4 471.2C685.1 468.6 686 465.1 686.4 462C686.8 458.9 687 455.8 687.7 452.9C688.4 450 689.2 446.9 690.7 444.4C692.2 441.8 694.2 439.4 696.8 437.6C699.3 435.8 702.7 434.5 706 433.7C709.3 432.9 712.9 432.7 716.7 432.7C720.5 432.7 724.9 433.1 729 433.7C733.1 434.3 737.4 435.2 741.2 436.3C745 437.4 748.6 438.9 751.9 440.3C755.2 441.7 758.3 443.5 761.1 444.9C763.9 446.3 766.6 447.8 768.8 448.6C771 449.4 772.7 449.8 774.1 449.5C775.5 449.2 776.6 448.2 777.2 446.7C777.9 445.2 778.1 443.2 778 440.6C777.9 438.1 777 434.5 776.4 431.4C775.8 428.3 774.9 425.6 774.1 422.2C773.3 418.8 772.6 414.9 771.5 411.1C770.4 407.3 768.2 402.9 767.2 399.2C766.2 395.5 765.5 392.1 765.5 389C765.5 385.9 765.8 383.3 767.2 380.5C768.6 377.7 770.9 374.7 774 372C777.1 369.3 782.1 366.1 785.9 364.4C789.7 362.7 793.3 361.4 797 361.8Z"/><path class="w" d="M790 368.5C792.1 369.4 792.5 369.7 794.4 372C796.3 374.3 799.4 378.5 801.2 382.2C803.1 385.9 804.2 389.9 805.5 394.1C806.8 398.4 807.9 403.2 808.9 407.7C809.9 412.2 810.7 416.3 811.4 421.3C812.1 426.3 812.7 432.9 813.2 437.6C813.8 442.4 814.7 445.7 814.7 449.8C814.7 453.9 814 458.2 813.2 462C812.4 465.8 811.4 469.5 810.1 472.8C808.8 476.1 807.3 479.3 805.5 481.9C803.7 484.4 801.9 486.8 799.4 488.1C796.9 489.4 793.8 489.9 790.2 489.9C786.6 489.8 782.1 488.7 778 487.8C773.9 486.9 769.8 485.7 765.7 484.5C761.6 483.3 757.6 481.6 753.5 480.7C749.4 479.8 745.3 479.2 741.2 478.9C737.1 478.6 733.1 478.6 729 478.7C724.9 478.8 720.8 479.4 716.7 479.6C712.6 479.8 707.8 480.3 704.5 480.1C701.2 479.9 698.7 479.6 696.8 478.6C694.9 477.6 693.9 476.6 693 474.3C692.1 472.1 691.4 468.2 691.5 465.1C691.6 462 692.4 458.7 693.8 455.9C695.2 453.1 697.3 450.3 699.9 448.3C702.5 446.3 705.8 444.9 709.1 443.7C712.4 442.5 716 441.9 719.8 441.4C723.6 440.9 727.9 440.8 732 440.9C736.1 441 740.5 441.4 744.3 442.1C748.1 442.8 751.9 444 755 444.9C758.1 445.8 760.9 447.6 762.7 447.5C764.5 447.4 764.8 445.8 765.7 444.4C766.6 443 767.8 441.5 768 439.1C768.2 436.7 767.8 433.2 767.2 429.9C766.6 426.6 765.3 422.5 764.2 419.2C763.1 415.9 761.6 413.1 760.4 410C759.2 406.9 757.9 404 757 400.9C756.1 397.8 755 394.4 755 391.6C755 388.8 755.5 386.4 757 383.9C758.5 381.3 761 378.7 763.8 376.3C766.6 373.9 771 371.1 774 369.5C777 367.9 779.3 366.7 782 366.5C784.7 366.3 787.9 367.6 790 368.5Z M793 365.5C796.5 365.9 799.3 367.2 802 369.5C804.7 371.8 807.2 375.8 809 379.5C810.8 383.2 811.6 387.4 812.5 391.5C813.4 395.6 813.6 399.8 814.2 404C814.8 408.2 815.6 412.3 816.3 417C817 421.7 817.9 427.5 818.5 432C819.1 436.5 819.8 440 819.8 444C819.8 448 819.3 452 818.6 456C817.9 460 816.8 464.4 815.5 468.2C814.2 472 812.8 475.7 811 478.8C809.2 481.9 807.4 484.7 804.8 486.6C802.2 488.5 799 489.8 795.5 490.2C792 490.6 788 489.8 784 489C780 488.2 775.9 486.8 771.8 485.6C767.7 484.4 763.7 482.8 759.6 481.8C755.5 480.9 751.4 480.2 747.3 479.9C743.2 479.5 739.1 479.6 735 479.7C730.9 479.8 726.9 480.4 722.8 480.6C718.7 480.9 714.6 481.3 710.6 481.2C706.6 481.1 702.3 480.9 699 480C695.7 479.1 692.8 478 691 476C689.2 474 688.6 471.1 688.4 468.2C688.2 465.3 689.1 461.8 690 458.8C690.9 455.9 691.8 453.2 693.7 450.5C695.6 447.8 698.3 444.8 701.5 442.8C704.7 440.8 708.9 439.5 712.7 438.6C716.5 437.7 720.5 437.2 724.5 437.2C728.5 437.2 732.8 437.8 736.8 438.5C740.8 439.2 744.6 440.1 748.2 441.2C751.8 442.3 755.5 443.8 758.5 445C761.5 446.2 764 447.9 766 448.2C768 448.5 769.3 448.4 770.5 447C771.7 445.6 772.8 442.7 773 440C773.2 437.3 772.4 433.8 771.8 430.6C771.1 427.4 770.1 424.1 769.1 420.7C768.1 417.3 767.2 413.9 766 410.5C764.8 407.1 763.1 403.4 762.1 400C761.1 396.6 760.3 393.3 760.3 390.3C760.3 387.3 760.7 384.9 762.1 382.2C763.5 379.5 765.8 376.7 768.9 374.2C772 371.7 777 368.4 781 367C785 365.6 789.5 365.1 793 365.5Z"/><path class="w3" d="M808 367.8L801.2 382.2L815.7 378.8L805.5 389.9L818.2 389.9L808 405.2L819.9 403L810.6 416.6L821.3 414.5L811.8 427.8L822.8 428.1L812.8 443.1L824.2 443.4L814.7 449.8L823.1 455.9L813.2 462L818.5 469.7L810.1 472.8L813.2 480.4L805.5 481.9L807 487.3L799.4 488.1 M767.2 380.5L757 383.9L765.5 389L755 391.6L767.2 399.2L757 400.9L771.5 411.1L761.3 411.1L774.9 423L765.5 423L776.6 434.9L768.1 434.9L777 444 M688.4 477.4L693 474.3L686.4 462L691.5 465.1L687.7 452.9L693.8 455.9L690.7 444.4L699.9 448.3L696.8 437.6L709.1 443.7L706 433.7 M785.9 364.4L790 368.5L797 361.8L794.4 372L808 366.9 M716.7 432.7L719.8 441.4L729 433.7L727.5 440.6"/><path class="w3" d="M777 426.2H813 M755.3 444.9V482.7"/>
</g>
<g clip-path="url(#c_persp)">
<path d="M619.8 56.1L1100 205.6L1100 340L480 340L480 96.1Z" fill="#a5a9b0"/><path class="pg" d="M-1677.2 712.3L619.8 56.1M-1727.3 750.9L629.7 59.2M-1781.5 792.7L639.8 62.3M-1840.3 838.1L650.1 65.6M-1904.4 887.5L660.6 68.8M-1974.5 941.6L671.3 72.2M-2051.6 1001L682.2 75.6M-2136.6 1066.6L693.4 79M-2230.9 1139.3L704.8 82.6M-2336.1 1220.4L716.4 86.2M-2454.2 1311.5L728.2 89.9M-2587.7 1414.5L740.3 93.6M-2739.9 1531.9L752.7 97.5M-2915.1 1667L765.3 101.4M-3118.6 1824L778.3 105.4M-2864.6 1782.9L791.5 109.6M-2622.8 1743.7L805 113.8M-2808.3 1912.1L818.8 118.1M-2554.4 1867.5L832.9 122.5M-2313.2 1825.1L847.4 127M-2083.6 1784.7L862.2 131.6M-2224.6 1957.4L877.3 136.3M-1984.4 1911.4L892.8 141.1M-1756.1 1867.7L908.7 146M-1539 1826.1L925 151.1M-1332.2 1786.5L941.7 156.3M-1408.3 1955.8L958.8 161.6M-1193.4 1910.7L976.3 167.1M-989 1867.9L994.3 172.7M-794.3 1827.1L1012.8 178.4M-826.2 2000.7L1031.8 184.4M-624.8 1954.2L1051.3 190.4M-433.4 1910.1L1071.3 196.6M-251.2 1868L1091.8 203M-237.9 2046L1113 209.6M-50.5 1998.2L1134.8 216.4M127.7 1952.7L1157.1 223.4M297.3 1909.4L1180.2 230.5M356.6 2091.8L1203.9 237.9M529.9 2042.6L1228.4 245.5M694.5 1995.8L1253.6 253.4M851.2 1951.2L1279.6 261.5M957.6 2138.1L1306.4 269.8M-146.7 275.1L750 2109.3M-93.9 260L977 2033.9M-44.6 245.9L1030.8 1745.8M1.6 232.7L1072.1 1524.5M44.8 220.4L1104.8 1349.2M85.5 208.8L1131.4 1206.9M123.7 197.8L1153.4 1089M159.8 187.5L1171.9 989.9M193.8 177.8L1187.7 905.3M226.1 168.6L1201.4 832.2M256.6 159.9L1213.3 768.5M285.6 151.6L1223.7 712.5M313.1 143.7L1233 662.8M339.3 136.3L1241.3 618.5M364.2 129.1L1248.7 578.6M388 122.3L1255.4 542.7M410.7 115.9L1261.5 510M432.3 109.7L1267.1 480.3M453.1 103.7L1272.2 453.1M473 98.1L1276.8 428M492 92.6L1281.1 405M510.2 87.4L1285.1 383.6M527.8 82.4L1288.8 363.8M544.6 77.6L1292.3 345.4M560.8 73L1295.5 328.3M576.4 68.5L1298.5 312.2M591.4 64.2L1301.3 297.2M605.9 60.1L1303.9 283.1M619.8 56.1L1306.4 269.8"/><path d="M509.2 254.4L805 113.8" stroke="#5cae57" stroke-width="2"/><path d="M516 250.7L600 313.4" stroke="#b35a5c" stroke-width="2"/><path d="M568.4 237.1V263.3L592.3 272.9" stroke="#5f646d" stroke-width="1" fill="none"/><path d="M568.4 263.3L589.2 253.5" stroke="#5f646d" stroke-width="1" fill="none" stroke-dasharray="2 1"/><text class="ax" x="570.5" y="237.5">z</text><text class="ax" x="590" y="253.5">y</text><text class="ax" x="594.5" y="274.5">x</text><g clip-path="url(#sofaclip)"><path d="M635 100.6C635.4 97.2 636.2 93.5 638.1 90.4C640 87.3 643.3 84.1 646.2 82.2C649.1 80.3 652.5 79 655.4 79.2C658.3 79.4 660.7 81.3 663.6 83.3C666.5 85.3 669.6 89 672.8 91.4C676 93.8 680 96.2 683 97.6C686 99 688.3 99 691.1 99.6C693.9 100.2 696 100.4 700 101C704 101.6 710.2 102.2 715.3 103C720.4 103.8 726 104.9 730.6 106.1C735.2 107.2 739.1 108.2 742.9 109.9C746.7 111.6 750 113.7 753.6 116C757.2 118.3 760.5 121.2 764.3 123.7C768.1 126.2 772.5 129.1 776.6 131.3C780.7 133.5 784.2 135.2 788.8 136.7C793.4 138.2 799 139.3 804.1 140.2C809.2 141.1 814.8 141.7 819.4 142.1C824 142.5 828.2 142.7 831.7 142.8C835.2 142.9 837.8 142 840.1 142.8C842.4 143.6 844.3 145.3 845.7 147.8C847.1 150.3 848.2 153.6 848.6 157.6C849 161.6 847.7 167.3 847.9 172.1C848.1 176.9 849.1 181.3 849.6 186.6C850.1 191.9 850.9 198.1 850.8 203.9C850.7 209.7 850.1 216 848.8 221.3C847.5 226.6 845.7 231.4 843 235.7C840.3 240 836.9 243.9 832.8 247.3C828.7 250.7 823.9 253.1 818.4 256C812.9 258.9 804.8 262.2 800 264.7C795.2 267.2 792.7 269.2 789.7 271.1C786.7 273 784.1 275 782 276.2C779.9 277.4 778.6 277.9 776.9 278.1C775.2 278.3 773.9 277.9 771.8 277.5C769.7 277.1 767.2 276.5 764.2 275.6C761.2 274.8 757.4 273.6 754 272.4C750.6 271.2 747.2 270.1 743.8 268.6C740.4 267.1 737 265.3 733.6 263.5C730.2 261.7 726.6 259.6 723.4 257.7C720.2 255.8 717.4 254.1 714.4 252C711.4 249.9 708.5 247.3 705.5 245C702.5 242.7 699.6 240.2 696.6 238C693.6 235.8 690.5 233.5 687.7 231.6C684.9 229.7 682.2 228 680 226.5C677.8 225 677.3 224.1 674.7 222.5C672.1 220.9 667.9 218.5 664.5 216.7C661.1 214.9 657.7 213.3 654.3 211.6C650.9 209.9 647.3 208.1 644.1 206.5C640.9 204.9 638 203.4 635.2 202.1C632.4 200.8 630.3 200.2 627.5 198.9C624.7 197.6 621.6 195.9 618.6 194.4C615.6 192.9 612.5 191.5 609.7 190C606.9 188.5 604.1 186.9 602 185.5C599.9 184.1 598.3 183.4 596.9 181.7C595.5 180 594.4 177.6 593.7 175.3C593 173 592.2 170.3 592.5 167.7C592.8 165.1 593.4 162.5 595.2 159.8C597 157.1 600 153.9 603.4 151.6C606.8 149.3 610.9 147.2 615.6 145.9C620.4 144.6 627 144.1 631.9 143.9C636.8 143.7 642.7 145.2 645.2 144.5C647.8 143.8 647.2 141.6 647.2 139.4C647.2 137.2 646.4 134.3 645.2 131.2C644 128.1 641.6 124.4 640.1 121C638.6 117.6 636.9 114.2 636 110.8C635.1 107.4 634.6 104 635 100.6Z" fill="#212b38"/><path d="M638.5 113C639.2 112.1 640.9 108.8 642.9 107.2C644.8 105.5 647.4 103.9 650 102.9C652.7 101.9 655.8 100.8 658.7 101.1C661.6 101.3 664.7 102.8 667.4 104.3C670.2 105.7 672.5 108 675.2 109.8C677.8 111.5 680.5 113.3 683.3 114.7C686.1 116.1 689.1 117.3 692.1 118.3C695.1 119.2 698.3 119.8 701.3 120.5C704.4 121.2 707.5 121.8 710.6 122.5C713.7 123.2 716.8 123.8 719.9 124.6C723 125.3 726.1 126.1 729.1 127C732.2 127.9 735.2 128.9 738.2 130C741.1 131.2 744.1 132.4 746.9 133.9C749.7 135.3 752.5 137 755.2 138.6C757.9 140.3 760.4 142.3 763.1 144C765.8 145.7 768.5 147.4 771.3 148.9C774.1 150.5 776.9 152 779.7 153.4C782.6 154.8 785.5 156.1 788.5 157.2C791.5 158.3 794.6 159.1 797.6 159.9C800.7 160.7 803.8 161.4 806.9 162.1C810 162.8 813.1 163.4 816.2 164C819.3 164.5 824 165.2 825.5 165.5" stroke="#2c3848" stroke-width="10" fill="none" filter="url(#b5)" opacity="0.9" stroke-linecap="round"/><path d="M763.1 145.4C764.4 146.2 768.5 148.7 771.3 150.3C774 151.8 776.8 153.4 779.7 154.7C782.5 156.1 785.4 157.5 788.4 158.5C791.4 159.6 794.4 160.4 797.5 161.3C800.5 162.1 803.6 162.8 806.7 163.5C809.8 164.2 812.9 164.8 815.9 165.4C819 166 823.7 166.7 825.2 167" stroke="#46566a" stroke-width="13" fill="none" filter="url(#b5)" opacity="0.45" stroke-linecap="round"/><path d="M788.4 158.5C789.9 159 794.4 160.4 797.5 161.3C800.5 162.1 803.6 162.8 806.7 163.5C809.8 164.2 812.9 164.8 815.9 165.4C819 166 823.7 166.7 825.2 167" stroke="#46566a" stroke-width="13" fill="none" filter="url(#b5)" opacity="0.6" stroke-linecap="round"/><path d="M636.2 107.1C636.7 105.5 637.5 100.3 639.1 97.5C640.8 94.6 643.3 92 646 90.2C648.6 88.3 652 86.3 655 86.2C658.1 86.1 661.3 87.8 664.1 89.5C666.9 91.1 669.1 93.9 671.8 96C674.5 98 677.2 100 680.1 101.6C683 103.2 686.1 104.4 689.3 105.4C692.5 106.3 695.9 106.7 699.2 107.2C702.5 107.7 705.9 108.1 709.2 108.5C712.5 109 715.8 109.5 719.1 110C722.4 110.6 725.8 111.3 729 112C732.3 112.8 735.6 113.6 738.7 114.7C741.9 115.8 745 117.1 747.9 118.6C750.9 120.1 753.8 121.9 756.6 123.8C759.4 125.6 762 127.8 764.7 129.7C767.5 131.5 770.4 133.3 773.3 135C776.2 136.7 779.1 138.3 782.1 139.7C785.2 141.1 788.3 142.5 791.4 143.5C794.6 144.5 798 145.1 801.3 145.8C804.5 146.4 807.9 147 811.2 147.4C814.5 147.9 817.8 148.3 821.2 148.6C824.5 148.9 829.6 149.1 831.2 149.2" stroke="#475669" stroke-width="7" fill="none" filter="url(#b3)" opacity="0.95" stroke-linecap="round"/><path d="M635.5 103.6C636 102 636.8 96.8 638.4 94C640.1 91.1 642.6 88.5 645.3 86.7C647.9 84.8 651.3 82.8 654.3 82.7C657.4 82.6 660.6 84.3 663.4 86C666.2 87.6 668.4 90.4 671.1 92.5C673.8 94.5 676.5 96.5 679.4 98.1C682.3 99.7 685.4 100.9 688.6 101.9C691.8 102.8 695.2 103.2 698.5 103.7C701.8 104.2 705.2 104.6 708.5 105C711.8 105.5 715.1 106 718.4 106.5C721.7 107.1 725.1 107.8 728.3 108.5C731.6 109.3 734.9 110.1 738 111.2C741.2 112.3 744.3 113.6 747.2 115.1C750.2 116.6 753.1 118.4 755.9 120.3C758.7 122.1 761.3 124.3 764 126.2C766.8 128 769.7 129.8 772.6 131.5C775.5 133.2 778.4 134.8 781.4 136.2C784.5 137.6 787.6 139 790.7 140C793.9 141 797.3 141.6 800.6 142.3C803.8 142.9 807.2 143.5 810.5 143.9C813.8 144.4 817.1 144.8 820.5 145.1C823.8 145.4 828.9 145.6 830.5 145.7" stroke="#5f6f83" stroke-width="2.5" fill="none" filter="url(#b2)" opacity="0.75" stroke-linecap="round"/><path d="M640.5 120.5C641.4 119.9 643.7 117.9 645.8 116.9C648 115.9 650.6 114.9 653.2 114.4C655.8 113.9 658.9 113.4 661.7 113.9C664.5 114.3 667.5 115.7 670.2 117.1C672.9 118.4 675.3 120.4 677.9 122C680.5 123.5 683.2 125.1 686 126.4C688.7 127.7 691.6 128.9 694.5 129.9C697.4 130.9 700.4 131.6 703.3 132.4C706.3 133.2 709.3 134 712.2 134.8C715.2 135.6 718.2 136.3 721.1 137.2C724.1 138 727 138.9 729.9 139.9C732.8 140.9 735.7 141.9 738.6 143.1C741.4 144.3 744.2 145.5 747 146.9C749.7 148.3 752.4 149.9 755.1 151.5C757.7 153.1 760.2 154.8 762.9 156.5C765.5 158.1 768.1 159.7 770.8 161.2C773.5 162.7 776.3 164.2 779 165.5C781.8 166.9 784.6 168.2 787.5 169.3C790.3 170.4 793.3 171.4 796.2 172.3C799.1 173.2 802.1 174 805 174.8C808 175.6 811 176.4 813.9 177.1C816.9 177.8 821.3 178.8 822.8 179.1" stroke="#171f29" stroke-width="6" fill="none" filter="url(#b3)" opacity="0.85" stroke-linecap="round"/><path d="M643.3 130.5C644.4 130.4 647.4 129.9 649.8 129.8C652.2 129.7 654.8 129.6 657.4 129.8C660.1 130 662.9 130.2 665.6 130.9C668.3 131.7 671.1 132.9 673.8 134.1C676.4 135.3 678.9 136.9 681.5 138.2C684.2 139.5 686.8 140.9 689.5 142.1C692.2 143.3 694.9 144.4 697.7 145.4C700.4 146.5 703.2 147.4 706 148.3C708.8 149.3 711.6 150.2 714.4 151.1C717.1 152.1 719.9 153 722.7 154C725.5 155 728.2 156 730.9 157.1C733.7 158.2 736.4 159.4 739.1 160.6C741.8 161.8 744.5 163 747.1 164.3C749.7 165.7 752.3 167.1 754.9 168.6C757.5 170 760 171.6 762.5 173.1C765.1 174.6 767.6 176.1 770.2 177.5C772.8 178.9 775.4 180.3 778.1 181.6C780.7 183 783.4 184.2 786.1 185.4C788.8 186.6 791.5 187.7 794.3 188.8C797 189.8 799.8 190.8 802.6 191.7C805.3 192.7 808.1 193.6 810.9 194.5C813.7 195.5 817.8 196.8 819.2 197.3" stroke="#3a4859" stroke-width="6" fill="none" filter="url(#b3)" opacity="0.9" stroke-linecap="round"/><path d="M646.5 139.6C647.8 140.1 651.8 141.5 654.4 142.4C657.1 143.4 659.7 144.3 662.4 145.3C665 146.3 667.6 147.3 670.2 148.4C672.8 149.4 675.4 150.5 678 151.5C680.6 152.5 683.2 153.6 685.8 154.6C688.4 155.7 691 156.8 693.6 157.8C696.2 158.9 698.8 159.9 701.4 161C704 162.1 706.6 163.2 709.1 164.3C711.7 165.4 714.3 166.6 716.8 167.7C719.4 168.8 722 170 724.5 171.1C727.1 172.3 729.6 173.5 732.2 174.7C734.7 175.9 737.2 177.2 739.7 178.4C742.2 179.6 744.7 180.9 747.2 182.1C749.8 183.4 752.2 184.7 754.7 186C757.2 187.3 759.6 188.7 762.1 190C764.6 191.4 767 192.7 769.5 194.1C772 195.4 774.5 196.7 777 198C779.5 199.3 782 200.5 784.5 201.7C787 203 789.5 204.3 792 205.5C794.6 206.7 797.1 207.8 799.7 209C802.2 210.1 804.8 211.2 807.4 212.4C809.9 213.6 812.4 214.8 815 216C817.5 217.3 821.2 219.2 822.5 219.8" stroke="#0e131a" stroke-width="7" fill="none" filter="url(#b3)" opacity="0.95" stroke-linecap="round"/><path d="M642 96C642.5 98.3 643.5 105.3 645 110C646.5 114.7 649.3 119.7 651 124C652.7 128.3 654.3 134 655 136" stroke="#43536a" stroke-width="6" fill="none" filter="url(#b3)" opacity="0.8" stroke-linecap="round"/><path d="M633.7 144.2C635.1 144.4 639.2 145.2 642 145.7C644.7 146.2 647.5 146.6 650.2 147.3C652.9 148 655.6 148.8 658.3 149.8C660.9 150.8 663.6 152 666.2 153.1C668.8 154.1 671.5 155.2 674.1 156.3C676.8 157.4 679.4 158.5 682 159.6C684.7 160.7 687.3 161.9 689.9 163.1C692.5 164.2 695.1 165.4 697.7 166.6C700.3 167.8 702.9 169 705.5 170.2C708.1 171.4 710.7 172.6 713.2 173.8C715.8 175.1 718.3 176.4 720.9 177.7C723.4 179 726 180.3 728.5 181.6C731 183 733.6 184.3 736.1 185.6C738.6 186.9 741.1 188.3 743.7 189.7C746.2 191 748.7 192.4 751.2 193.8C753.7 195.2 756.2 196.6 758.7 197.9C761.2 199.3 763.7 200.7 766.2 202C768.7 203.4 771.3 204.7 773.8 206C776.3 207.4 778.8 208.8 781.3 210.1C783.9 211.4 786.4 212.6 789 213.9C791.5 215.2 794.1 216.5 796.6 217.7C799.2 219 801.7 220.3 804.3 221.7C806.8 223 810.6 225 811.8 225.7" stroke="#19212c" stroke-width="6" fill="none" filter="url(#b3)" opacity="0.8" stroke-linecap="round"/><path d="M617.3 146.8C618.7 146.8 623.1 146.8 625.9 146.7C628.8 146.7 631.8 146.4 634.6 146.7C637.4 146.9 640.2 147.6 642.9 148.4C645.7 149.3 648.3 150.7 651 151.8C653.7 153 656.4 154.1 659.1 155.2C661.8 156.4 664.5 157.5 667.2 158.7C669.8 159.9 672.5 161.2 675.1 162.5C677.7 163.8 680.4 165.1 683 166.3C685.6 167.6 688.2 168.9 690.9 170.2C693.5 171.5 696.1 172.8 698.7 174.1C701.3 175.5 703.8 176.9 706.4 178.3C709 179.8 711.5 181.2 714.1 182.6C716.6 184 719.2 185.4 721.8 186.8C724.3 188.3 726.9 189.7 729.4 191.1C732 192.5 734.5 194 737.1 195.4C739.6 196.8 742.2 198.3 744.7 199.7C747.3 201.1 749.8 202.6 752.4 204C754.9 205.4 757.5 206.9 760 208.3C762.6 209.8 765.1 211.3 767.6 212.7C770.1 214.2 772.7 215.6 775.2 217.1C777.8 218.5 780.3 219.9 782.8 221.4C785.4 222.8 787.9 224.3 790.5 225.7C793 227.2 796.8 229.3 798.1 230.1" stroke="#323f50" stroke-width="8" fill="none" filter="url(#b3)" opacity="0.9" stroke-linecap="round"/><path d="M738.6 195.2C739.9 195.9 743.7 198.1 746.3 199.5C748.8 200.9 751.4 202.3 753.9 203.8C756.5 205.2 759 206.6 761.5 208.1C764.1 209.5 766.6 211 769.1 212.4C771.7 213.9 774.2 215.3 776.7 216.7C779.3 218.1 781.8 219.6 784.4 221C786.9 222.4 789.5 223.8 792 225.3C794.6 226.7 798.4 228.9 799.6 229.6" stroke="#4a5a6e" stroke-width="9" fill="none" filter="url(#b5)" opacity="0.45" stroke-linecap="round"/><path d="M761.5 208.1C762.8 208.8 766.6 211 769.1 212.4C771.7 213.9 774.2 215.3 776.7 216.7C779.3 218.1 781.8 219.6 784.4 221C786.9 222.4 789.5 223.8 792 225.3C794.6 226.7 798.4 228.9 799.6 229.6" stroke="#4a5a6e" stroke-width="9" fill="none" filter="url(#b5)" opacity="0.55" stroke-linecap="round"/><path d="M610 149.5C611.5 149.4 615.9 149 618.8 148.7C621.8 148.4 624.8 147.8 627.7 147.9C630.5 148 633.4 148.5 636.1 149.3C638.9 150.1 641.6 151.6 644.3 152.8C647 154 649.7 155.1 652.4 156.3C655.2 157.4 657.9 158.5 660.6 159.8C663.3 161 665.9 162.4 668.5 163.8C671.2 165.1 673.8 166.4 676.4 167.7C679.1 169 681.7 170.3 684.4 171.7C687 173 689.6 174.4 692.2 175.8C694.8 177.2 697.4 178.7 700 180.1C702.5 181.6 705.1 183.1 707.7 184.5C710.2 186 712.8 187.4 715.4 188.9C718 190.3 720.5 191.8 723.1 193.3C725.7 194.7 728.2 196.2 730.8 197.6C733.4 199.1 736 200.5 738.5 202C741.1 203.5 743.7 204.9 746.2 206.4C748.8 207.8 751.4 209.3 753.9 210.8C756.4 212.3 759 213.9 761.5 215.4C764 216.9 766.6 218.4 769.1 220C771.6 221.5 774.2 223 776.7 224.5C779.3 226 781.8 227.5 784.4 229C786.9 230.5 790.7 232.8 792 233.5" stroke="#171f2a" stroke-width="3" fill="none" filter="url(#b2)" opacity="0.6" stroke-linecap="round"/><path d="M603.5 153.3C604.5 153.9 607.2 155.7 609.4 156.7C611.7 157.7 614.3 158.3 616.9 159.3C619.5 160.2 622.4 161 625.1 162.2C627.9 163.3 630.6 164.7 633.4 166C636.1 167.2 638.9 168.5 641.6 169.8C644.4 171 647.2 172.1 649.9 173.4C652.7 174.7 655.4 176.1 658.1 177.4C660.8 178.7 663.5 180.1 666.2 181.5C668.9 182.8 671.6 184.1 674.3 185.5C677 186.9 679.7 188.2 682.4 189.7C685 191.1 687.7 192.6 690.3 194.2C692.9 195.7 695.4 197.4 697.9 199C700.5 200.6 703.1 202.2 705.7 203.8C708.2 205.4 710.8 207 713.3 208.6C715.8 210.3 718.4 211.9 720.9 213.6C723.4 215.3 725.9 217 728.4 218.6C731 220.2 733.6 221.7 736.2 223.3C738.8 224.8 741.4 226.4 744 227.9C746.6 229.4 749.2 230.9 751.9 232.4C754.5 233.9 757.2 235.4 759.8 236.8C762.5 238.2 765.2 239.5 767.9 240.8C770.6 242.1 773.4 243.3 776.1 244.6C778.9 245.8 783 247.6 784.4 248.2" stroke="#414f62" stroke-width="8" fill="none" filter="url(#b3)" opacity="0.95" stroke-linecap="round"/><path d="M596.1 159.4C596.5 160.8 597.3 165.1 598.7 167.5C600.1 170 602.3 172.1 604.6 174C606.9 175.8 609.9 177.1 612.6 178.6C615.3 180 618.1 181.4 620.9 182.8C623.7 184.2 626.4 185.6 629.2 186.9C632.1 188.2 634.9 189.4 637.8 190.7C640.6 192 643.4 193.3 646.2 194.7C649 196.1 651.7 197.5 654.5 198.9C657.3 200.2 660.1 201.6 662.8 203C665.6 204.4 668.4 205.8 671.1 207.3C673.8 208.8 676.6 210.3 679.2 211.9C681.8 213.6 684.2 215.6 686.8 217.3C689.4 219.1 692 220.7 694.5 222.5C697.1 224.3 699.6 226.1 702.1 227.9C704.6 229.8 707.1 231.7 709.5 233.6C712 235.5 714.4 237.4 716.9 239.2C719.4 241 722.1 242.7 724.7 244.3C727.3 246 730 247.6 732.7 249.1C735.4 250.6 738.1 252.1 740.9 253.6C743.6 255 746.4 256.4 749.2 257.7C752.1 258.9 755 260 757.9 261.1C760.8 262.2 763.7 263.2 766.7 264.1C769.7 265 774.1 266.2 775.6 266.7" stroke="#263140" stroke-width="8" fill="none" filter="url(#b3)" opacity="0.9" stroke-linecap="round"/><path d="M594.5 163.7C594.8 165.2 595.2 170.1 596.4 172.8C597.7 175.5 599.8 178 602 180C604.3 182.1 607.2 183.4 610 185C612.7 186.5 615.5 187.8 618.3 189.3C621.1 190.7 623.8 192.1 626.7 193.5C629.5 194.8 632.4 196 635.2 197.3C638.1 198.6 640.9 199.9 643.7 201.3C646.5 202.7 649.3 204.1 652.1 205.5C654.9 206.9 657.7 208.3 660.4 209.7C663.2 211.1 666 212.5 668.8 214C671.5 215.5 674.3 217 676.9 218.6C679.5 220.3 681.9 222.3 684.5 224.1C687 225.9 689.7 227.6 692.2 229.4C694.8 231.2 697.3 233 699.8 234.9C702.3 236.8 704.7 238.8 707.2 240.7C709.6 242.7 712 244.7 714.5 246.5C717 248.4 719.7 250.1 722.3 251.7C724.9 253.4 727.6 255 730.3 256.5C733.1 258.1 735.8 259.6 738.6 261C741.4 262.4 744.1 263.8 747 265.1C749.9 266.3 752.8 267.3 755.8 268.3C758.7 269.3 761.7 270.3 764.7 271.1C767.7 272 772.3 273.1 773.8 273.5" stroke="#131a24" stroke-width="7" fill="none" filter="url(#b3)" opacity="0.9" stroke-linecap="round"/><path d="M672 190C674.3 192.7 680.8 200.3 686 206C691.2 211.7 697 218.3 703 224C709 229.7 718.8 237.3 722 240" stroke="#536478" stroke-width="5" fill="none" filter="url(#b3)" opacity="0.8" stroke-linecap="round"/><path d="M666 196C668.3 199 674.8 208 680 214C685.2 220 694.2 229 697 232" stroke="#141b25" stroke-width="4" fill="none" filter="url(#b2)" opacity="0.6" stroke-linecap="round"/><path d="M637.3 108.9C638 107.7 639.4 103.8 641.2 101.8C643.1 99.7 645.6 97.8 648.3 96.5C650.9 95.2 654.2 93.8 657.1 93.9C660 94.1 663.2 95.7 665.9 97.2C668.7 98.7 671 101.2 673.6 103C676.3 104.8 679 106.7 681.8 108.2C684.7 109.6 687.7 110.8 690.8 111.8C693.8 112.8 697.1 113.3 700.2 113.9C703.4 114.6 706.6 115.1 709.8 115.7C712.9 116.3 716.1 116.9 719.3 117.6C722.4 118.2 725.6 119 728.7 119.9C731.8 120.7 734.9 121.6 737.9 122.8C741 123.9 744 125.1 746.8 126.6C749.7 128.1 752.5 129.8 755.2 131.5C758 133.3 760.5 135.3 763.3 137C766 138.8 768.7 140.5 771.6 142.1C774.4 143.7 777.2 145.3 780.1 146.7C783.1 148.1 786 149.4 789.1 150.5C792.1 151.5 795.3 152.3 798.5 153C801.6 153.8 804.8 154.4 807.9 155C811.1 155.7 814.3 156.2 817.5 156.7C820.6 157.2 825.4 157.7 827 157.9" stroke="#0b1017" stroke-width=".8" fill="none" opacity="0.45"/><path d="M641.7 124.7C642.6 124.3 645.3 122.9 647.5 122.3C649.7 121.6 652.3 121.1 655 120.8C657.6 120.6 660.5 120.4 663.3 121C666.1 121.5 669 122.9 671.7 124.2C674.4 125.5 676.8 127.3 679.4 128.7C682 130.2 684.7 131.7 687.4 132.9C690.2 134.2 693 135.3 695.8 136.4C698.7 137.4 701.6 138.2 704.5 139C707.3 139.9 710.2 140.7 713.1 141.6C716 142.4 718.9 143.3 721.8 144.2C724.6 145.1 727.5 146 730.3 147.1C733.2 148.1 736 149.2 738.8 150.4C741.6 151.6 744.3 152.8 747 154.2C749.7 155.5 752.4 157.1 755 158.6C757.6 160.1 760.1 161.8 762.7 163.4C765.3 165 767.9 166.5 770.6 168C773.2 169.5 775.9 170.9 778.6 172.2C781.4 173.6 784.1 174.9 786.9 176C789.7 177.2 792.5 178.2 795.4 179.1C798.2 180.1 801.1 181 804 181.9C806.9 182.7 809.8 183.5 812.7 184.3C815.5 185.2 819.9 186.3 821.3 186.7" stroke="#0b1017" stroke-width=".8" fill="none" opacity="0.4"/><path d="M626.4 145.3C627.8 145.5 632 145.9 634.8 146.2C637.7 146.5 640.5 146.5 643.3 147C646 147.5 648.8 148.3 651.5 149.2C654.2 150.1 656.8 151.4 659.5 152.5C662.1 153.6 664.8 154.7 667.5 155.8C670.1 157 672.8 158 675.4 159.2C678.1 160.4 680.7 161.6 683.3 162.8C685.9 164 688.5 165.3 691.2 166.5C693.8 167.7 696.4 169 699 170.2C701.6 171.4 704.2 172.7 706.8 174C709.4 175.3 711.9 176.6 714.4 178C717 179.3 719.5 180.7 722.1 182.1C724.6 183.4 727.2 184.8 729.7 186.2C732.3 187.5 734.8 188.9 737.3 190.3C739.9 191.7 742.4 193.1 744.9 194.5C747.4 195.9 749.9 197.3 752.5 198.7C755 200.1 757.5 201.5 760.1 202.9C762.6 204.3 765.1 205.7 767.7 207C770.2 208.4 772.7 209.9 775.2 211.2C777.8 212.6 780.3 214 782.9 215.3C785.4 216.7 788 218 790.5 219.4C793.1 220.7 795.6 222.1 798.1 223.5C800.7 224.8 804.5 226.9 805.7 227.6" stroke="#0b1017" stroke-width=".8" fill="none" opacity="0.4"/><path d="M600.4 155.9C601.2 156.8 603.1 159.6 605 161.2C606.8 162.8 609.3 164.1 611.8 165.4C614.3 166.7 617.2 167.7 619.9 169C622.6 170.3 625.4 171.7 628.2 173C630.9 174.3 633.7 175.6 636.5 176.9C639.2 178.2 642.1 179.3 644.9 180.6C647.6 181.9 650.4 183.3 653.1 184.6C655.9 186 658.6 187.3 661.3 188.7C664.1 190.1 666.8 191.4 669.5 192.8C672.3 194.2 675 195.6 677.7 197C680.4 198.5 683.1 200 685.7 201.6C688.3 203.2 690.7 205 693.3 206.7C695.9 208.3 698.5 209.9 701 211.6C703.6 213.3 706.1 214.9 708.6 216.7C711.2 218.4 713.6 220.2 716.1 221.9C718.6 223.7 721.1 225.5 723.6 227.2C726.2 228.9 728.8 230.5 731.4 232.1C734 233.7 736.6 235.2 739.3 236.7C741.9 238.3 744.6 239.8 747.3 241.2C750 242.7 752.7 244.2 755.4 245.5C758.2 246.8 760.9 248 763.7 249.2C766.5 250.4 769.4 251.6 772.2 252.7C775 253.8 779.3 255.3 780.7 255.9" stroke="#0b1017" stroke-width=".8" fill="none" opacity="0.6"/><path d="M639 101C639.2 102.8 639.5 108.3 640.5 112C641.5 115.7 643.4 119.5 645 123C646.6 126.5 648.8 130 650 133C651.2 136 651.7 139.7 652 141" stroke="#0b1017" stroke-width=".8" fill="none" opacity="0.5"/><path d="M598 160C597.8 161.8 596.7 167.5 597 171C597.3 174.5 598.3 178.2 600 181C601.7 183.8 605.8 186.8 607 188" stroke="#0b1017" stroke-width=".8" fill="none" opacity="0.5"/></g><path d="M840.1 142.8C842.5 142.6 844.3 145.3 845.7 147.8C847.1 150.3 848.2 153.6 848.6 157.6C849 161.6 847.7 167.3 847.9 172.1C848.1 176.9 849.1 181.3 849.6 186.6C850.1 191.9 850.9 198.1 850.8 203.9C850.7 209.7 850.1 216 848.8 221.3C847.5 226.6 845.7 231.4 843 235.7C840.3 240 836.9 243.9 832.8 247.3C828.7 250.7 823.9 253.1 818.4 256C812.9 258.9 804.8 262.2 800 264.7C795.2 267.2 792.7 269.2 789.7 271.1C786.7 273 784.1 275 782 276.2C779.9 277.4 778.6 279.4 776.9 278.1C775.2 276.8 772.8 271.7 771.8 268.6C770.8 265.5 771 262.4 771.2 259.6C771.4 256.8 772.2 254.6 773.1 252C774 249.4 775.4 246.6 776.9 244.3C778.4 242 780.1 239.9 782 238C783.9 236.1 786.3 234.3 788.4 232.9C790.5 231.5 792.9 230.5 794.8 229.7C796.7 228.8 798 228.5 800 227.8C802 227.1 803.5 226.4 806.8 225.6C810.1 224.8 816.7 224.4 819.8 222.7C822.9 221 824.6 218.6 825.6 215.5C826.6 212.4 826.1 208.2 825.6 203.9C825.1 199.6 823.4 194.2 822.7 189.4C822 184.6 821 179.8 821.3 175C821.5 170.2 822.5 164.8 824.2 160.5C825.9 156.2 828.8 151.8 831.4 148.9C834 146 837.7 143 840.1 142.8Z" fill="url(#capg)" stroke="#0e141d" stroke-width=".9"/><path d="M635 100.6C635.4 97.2 636.2 93.5 638.1 90.4C640 87.3 643.3 84.1 646.2 82.2C649.1 80.3 652.5 79 655.4 79.2C658.3 79.4 660.7 81.3 663.6 83.3C666.5 85.3 669.6 89 672.8 91.4C676 93.8 680 96.2 683 97.6C686 99 688.3 99 691.1 99.6C693.9 100.2 696 100.4 700 101C704 101.6 710.2 102.2 715.3 103C720.4 103.8 726 104.9 730.6 106.1C735.2 107.2 739.1 108.2 742.9 109.9C746.7 111.6 750 113.7 753.6 116C757.2 118.3 760.5 121.2 764.3 123.7C768.1 126.2 772.5 129.1 776.6 131.3C780.7 133.5 784.2 135.2 788.8 136.7C793.4 138.2 799 139.3 804.1 140.2C809.2 141.1 814.8 141.7 819.4 142.1C824 142.5 828.2 142.7 831.7 142.8C835.2 142.9 837.8 142 840.1 142.8C842.4 143.6 844.3 145.3 845.7 147.8C847.1 150.3 848.2 153.6 848.6 157.6C849 161.6 847.7 167.3 847.9 172.1C848.1 176.9 849.1 181.3 849.6 186.6C850.1 191.9 850.9 198.1 850.8 203.9C850.7 209.7 850.1 216 848.8 221.3C847.5 226.6 845.7 231.4 843 235.7C840.3 240 836.9 243.9 832.8 247.3C828.7 250.7 823.9 253.1 818.4 256C812.9 258.9 804.8 262.2 800 264.7C795.2 267.2 792.7 269.2 789.7 271.1C786.7 273 784.1 275 782 276.2C779.9 277.4 778.6 277.9 776.9 278.1C775.2 278.3 773.9 277.9 771.8 277.5C769.7 277.1 767.2 276.5 764.2 275.6C761.2 274.8 757.4 273.6 754 272.4C750.6 271.2 747.2 270.1 743.8 268.6C740.4 267.1 737 265.3 733.6 263.5C730.2 261.7 726.6 259.6 723.4 257.7C720.2 255.8 717.4 254.1 714.4 252C711.4 249.9 708.5 247.3 705.5 245C702.5 242.7 699.6 240.2 696.6 238C693.6 235.8 690.5 233.5 687.7 231.6C684.9 229.7 682.2 228 680 226.5C677.8 225 677.3 224.1 674.7 222.5C672.1 220.9 667.9 218.5 664.5 216.7C661.1 214.9 657.7 213.3 654.3 211.6C650.9 209.9 647.3 208.1 644.1 206.5C640.9 204.9 638 203.4 635.2 202.1C632.4 200.8 630.3 200.2 627.5 198.9C624.7 197.6 621.6 195.9 618.6 194.4C615.6 192.9 612.5 191.5 609.7 190C606.9 188.5 604.1 186.9 602 185.5C599.9 184.1 598.3 183.4 596.9 181.7C595.5 180 594.4 177.6 593.7 175.3C593 173 592.2 170.3 592.5 167.7C592.8 165.1 593.4 162.5 595.2 159.8C597 157.1 600 153.9 603.4 151.6C606.8 149.3 610.9 147.2 615.6 145.9C620.4 144.6 627 144.1 631.9 143.9C636.8 143.7 642.7 145.2 645.2 144.5C647.8 143.8 647.2 141.6 647.2 139.4C647.2 137.2 646.4 134.3 645.2 131.2C644 128.1 641.6 124.4 640.1 121C638.6 117.6 636.9 114.2 636 110.8C635.1 107.4 634.6 104 635 100.6Z" fill="none" stroke="#10161f" stroke-width="1"/><path d="M686.5 99.4C684.9 101.1 679 105.4 676.6 109.3C674.2 113.2 672.4 118.2 672.2 122.6C672 127 674 131.5 675.5 135.9C677 140.3 679.7 145.4 681 149.1C682.3 152.8 685.1 156.2 683.2 158C681.3 159.8 673.7 159.4 669.6 159.8C665.5 160.2 662.2 160.1 658.8 160.6C655.3 161.1 651.7 161.6 648.9 162.9C646.1 164.2 644 165.8 642 168.2C640 170.6 638 174.1 636.7 177.4C635.4 180.7 634.7 184.5 634.4 188.1C634.1 191.7 634.7 197.2 634.7 199 M734.1 107.1C731.9 108.9 724.3 114.2 720.8 118.2C717.3 122.2 713.8 126.6 713.1 131.4C712.4 136.2 714.8 141.7 716.4 146.9C718 152.1 721.3 158 723 162.4C724.7 166.8 726 170.9 726.4 173.5C726.8 176.1 727.4 177 725.2 177.9C723 178.8 717.3 178.4 713.1 179C708.9 179.6 703.8 180.5 699.8 181.2C695.8 181.9 692.3 181.6 688.8 183.4C685.3 185.2 681.4 188.8 678.8 192.3C676.2 195.8 674.6 200.6 673.3 204.4C672 208.2 671.3 211.7 671.1 215C670.9 218.3 671.9 222.5 672 224 M780.5 137C779 138.7 773.9 143 771.7 146.9C769.5 150.8 767.7 155 767.3 160.2C766.9 165.4 768.6 172.4 769.5 177.9C770.4 183.4 772.6 189.4 772.8 193.4C773 197.4 773.2 200 770.6 202.2C768 204.4 761.3 205.2 757.3 206.7C753.2 208.2 749.6 209.7 746.3 211.1C743 212.5 740.4 213.2 737.4 215C734.4 216.8 730.7 218.8 728 222C725.3 225.2 722.7 229.8 721 234C719.3 238.2 718.5 244.8 718 247" fill="none" stroke="#0b0f16" stroke-width="1" stroke-dasharray="5 1.2" opacity=".85" clip-path="url(#sofaclip)"/>
</g>
<path d="M40.2 234.7V264.2H69.7" stroke="#5f646d" stroke-width="1" fill="none"/><text class="ax" x="43.2" y="233.2">y</text><text class="ax" x="72.2" y="264.7">x</text>
<path d="M40.2 525V554.5H69.7" stroke="#5f646d" stroke-width="1" fill="none"/><text class="ax" x="43.2" y="525.5">z</text><text class="ax" x="72.2" y="555">x</text>
<path d="M568.2 524.9V554.4H597.7" stroke="#5f646d" stroke-width="1" fill="none"/><text class="ax" x="571.2" y="525.4">z</text><text class="ax" x="600.2" y="552.9">y</text>
<path d="M4 8h83v15q0 3 -3 3h-80z" fill="#e4e6ea"/><text class="lb" x="12.4" y="20.9" fill="#5a5b60">Superiore</text><path d="M76.5 10V24" stroke="#5a5b60" stroke-width="1"/><path d="M78.5 15h6l-3 3.5z" fill="#5a5b60"/>
<path d="M532 8h92v15q0 3 -3 3h-89z" fill="#6ea2f7"/><text class="lb" x="541.2" y="20.9" fill="#1b2a5e">Prospettica</text><path d="M613.5 10V24" stroke="#1b2a5e" stroke-width="1"/><path d="M615.5 15h6l-3 3.5z" fill="#1b2a5e"/>
<path d="M4 304h75v15q0 3 -3 3h-72z" fill="#e4e6ea"/><text class="lb" x="13.3" y="316.9" fill="#5a5b60">Frontale</text><path d="M68.5 306V320" stroke="#5a5b60" stroke-width="1"/><path d="M70.5 311h6l-3 3.5z" fill="#5a5b60"/>
<path d="M532 304h63v15q0 3 -3 3h-60z" fill="#e4e6ea"/><text class="lb" x="539.2" y="316.9" fill="#5a5b60">Destro</text><path d="M584.5 306V320" stroke="#5a5b60" stroke-width="1"/><path d="M586.5 311h6l-3 3.5z" fill="#5a5b60"/>
</svg>
</body></html>
